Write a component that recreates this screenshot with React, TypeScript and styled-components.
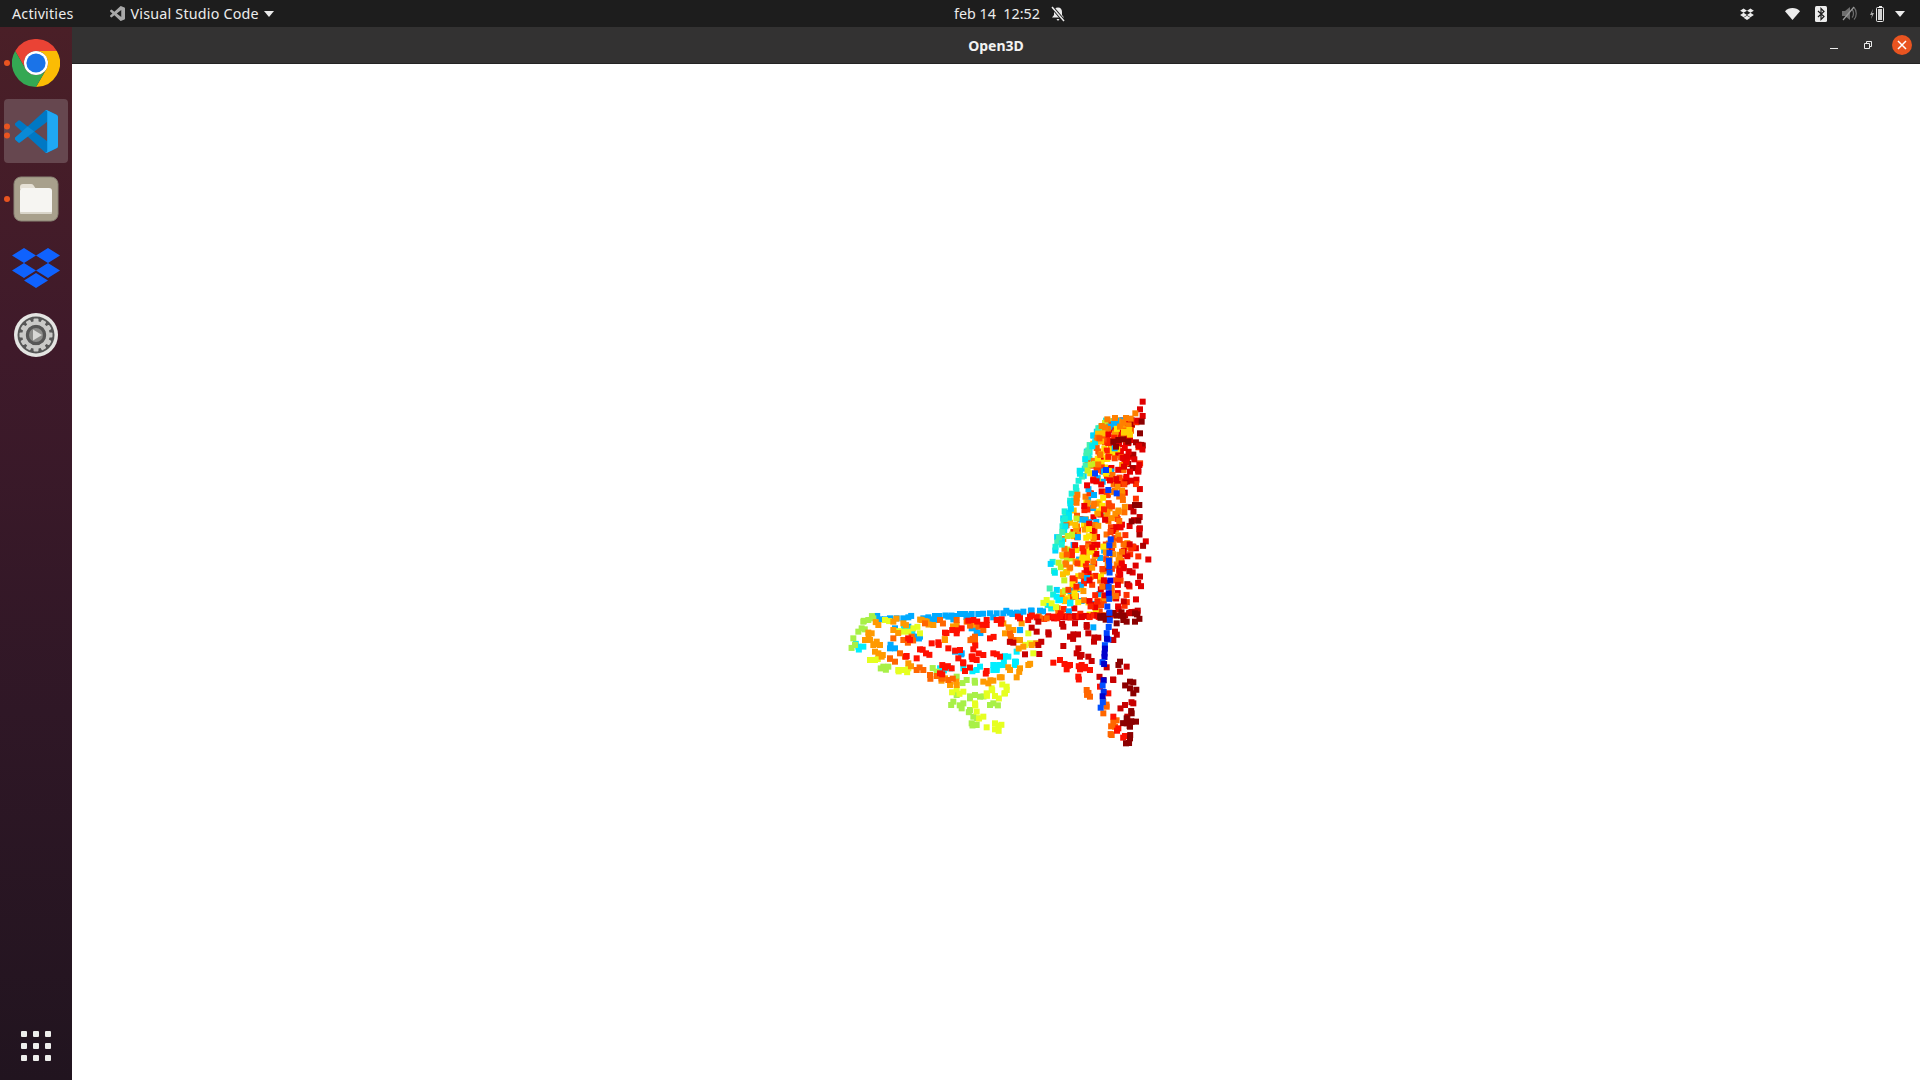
import styled, { createGlobalStyle } from "styled-components";

const GlobalStyle = createGlobalStyle`
  html, body, #root {
    margin: 0;
    height: 100%;
  }
  body {
    overflow: hidden;
    background: #fff;
    font-family: "Noto Sans", "Open Sans", sans-serif;
  }
`;

const Screen = styled.div`
  width: 1920px;
  height: 1080px;
  display: flex;
  flex-direction: column;
  overflow: hidden;
`;

const TopBar = styled.header`
  height: 27px;
  flex: none;
  display: grid;
  grid-template-columns: 942px auto 1fr;
  align-items: center;
  padding: 0 12px;
  background: #1d1d1d;
  color: #ececec;
  font-size: 14.3px;
  line-height: 25px;
`;

const TopLeft = styled.div`
  display: flex;
  align-items: center;
  letter-spacing: 0.2px;
`;

const AppMenu = styled.div`
  display: flex;
  align-items: center;
  margin-left: 36px;
  gap: 6px;
`;

const Caret = styled.svg`
  margin-left: -1px;
`;

const Clock = styled.div`
  display: flex;
  align-items: center;
  gap: 10px;
`;

const Tray = styled.div`
  display: flex;
  align-items: center;
  justify-content: flex-end;
  height: 27px;
  padding-right: 3px;
`;

const TrayIcon = styled.svg<{ $gap: number }>`
  display: block;
  flex: none;
  margin-left: ${(p) => p.$gap}px;
`;

const Body = styled.div`
  flex: 1;
  display: flex;
  min-height: 0;
`;

const Dock = styled.nav`
  width: 72px;
  flex: none;
  display: flex;
  flex-direction: column;
  align-items: center;
  padding: 4px 0 12px;
  box-sizing: border-box;
  background: linear-gradient(180deg, #4a1f27 0%, #3f1a2a 30%, #2f1726 65%, #21141f 100%);
`;

const DockItem = styled.div<{ $active?: boolean }>`
  position: relative;
  width: 64px;
  height: 64px;
  margin-bottom: 4px;
  flex: none;
  display: flex;
  align-items: center;
  justify-content: center;
  border-radius: 4px;
  background: ${(p) => (p.$active ? "#66474f" : "transparent")};
`;

const Dots = styled.div`
  position: absolute;
  left: 0;
  top: 50%;
  transform: translateY(-50%);
  display: flex;
  flex-direction: column;
  gap: 3px;
`;

const Dot = styled.span`
  width: 6px;
  height: 6px;
  border-radius: 50%;
  background: #e95420;
`;

const AppGrid = styled.div`
  margin-top: auto;
  margin-bottom: 7px;
  display: grid;
  grid-template-columns: repeat(3, 6px);
  gap: 6px;
`;

const GridDot = styled.span`
  width: 6px;
  height: 6px;
  border-radius: 1px;
  background: #eeeeec;
`;

const Window = styled.main`
  flex: 1;
  min-width: 0;
  display: flex;
  flex-direction: column;
`;

const TitleBar = styled.div`
  position: relative;
  height: 37px;
  flex: none;
  display: flex;
  align-items: center;
  justify-content: flex-end;
  box-sizing: border-box;
  border-bottom: 1px solid #232323;
  background: #333232;
  padding-right: 8px;
`;

const Title = styled.div`
  position: absolute;
  left: 0;
  right: 0;
  text-align: center;
  color: #f2f2f2;
  font-size: 14px;
  font-weight: 700;
`;

const WinButton = styled.div<{ $close?: boolean }>`
  width: 20px;
  height: 20px;
  margin-left: 14px;
  display: flex;
  align-items: center;
  justify-content: center;
  border-radius: 50%;
  background: ${(p) => (p.$close ? "#e95420" : "transparent")};
`;

const Canvas = styled.svg`
  flex: 1;
  display: block;
  width: 100%;
  min-height: 0;
  background: #fff;
`;

const VSCODE =
  "M96.5 10.8 75.9.9a6.2 6.2 0 0 0-7.1 1.2L29.3 38.1 12.1 25.1a4.2 4.2 0 0 0-5.3.2L1.3 30.3a4.2 4.2 0 0 0 0 6.2L16.2 50 1.3 63.5a4.2 4.2 0 0 0 0 6.2l5.5 5a4.2 4.2 0 0 0 5.3.2l17.2-13 39.5 36a6.2 6.2 0 0 0 7.1 1.2l20.6-9.9a6.2 6.2 0 0 0 3.5-5.6V16.4a6.2 6.2 0 0 0-3.5-5.6zM75 27.3 45.1 50 75 72.7z";

const DROPBOX = "M12 2 0 9.500 12 17l12-7.500zM36 2 24 9.500 36 17l12-7.500zM0 24.500 12 32l12-7.500L12 17zM36 17l-12 7.500L36 32l12-7.500zM12 34.500 24 42l12-7.500L24 27z";

const Chrome = () => (
  <svg width="48" height="48" viewBox="0 0 48 48">
    <path fill="#ea4335" d="M3.2 12A24 24 0 0 1 44.8 12H24A12 12 0 0 0 13.6 30z" />
    <path fill="#fbbc04" d="M44.8 12A24 24 0 0 1 24 48L34.4 30A12 12 0 0 0 24 12z" />
    <path fill="#34a853" d="M24 48A24 24 0 0 1 3.2 12L13.6 30A12 12 0 0 0 34.4 30z" />
    <circle cx="24" cy="24" r="12" fill="#fff" />
    <circle cx="24" cy="24" r="9.6" fill="#1a73e8" />
  </svg>
);

const VsCode = () => (
  <svg width="43" height="43" viewBox="0 0 100 100">
    <path fill="#0078c4" fillRule="evenodd" d={VSCODE} />
    <path fill="#0a8ad6" d="M1.3 63.5 29.3 38.1 45.1 50 12.1 74.9a4.2 4.2 0 0 1-5.3-.2l-5.5-5a4.2 4.2 0 0 1 0-6.2z" />
    <path fill="#1fa8f4" d="M68.8 2.1a6.2 6.2 0 0 1 7.1-1.2l20.6 9.900a6.2 6.2 0 0 1 3.500 5.600v67.200a6.2 6.2 0 0 1-3.500 5.600L75.900 99.100a6.2 6.2 0 0 1-7.100-1.200c3 2.600 6.200.6 6.200-2.400V4.500c0-3-3.200-5-6.200-2.400z" />
  </svg>
);

const Files = () => (
  <svg width="46" height="46" viewBox="0 0 46 46">
    <rect x="1" y="1" width="44" height="44" rx="7" fill="#a8a08c" stroke="#8b8576" />
    <path fill="#e6e1d6" d="M7 11a3 3 0 0 1 3-3h8a3 3 0 0 1 2.500 1.300L23 13H7z" />
    <rect x="7" y="12" width="32" height="26" rx="3" fill="#f6f5f2" />
    <rect x="7" y="36" width="32" height="2" rx="1" fill="#d9d5ca" />
  </svg>
);

const Dropbox = () => (
  <svg width="48" height="42" viewBox="0 0 48 42">
    <path fill="#0f62fe" d={DROPBOX} />
  </svg>
);

const Settings = () => {
  const teeth = Array.from({ length: 12 }, (_, i) => i * 30);
  return (
    <svg width="46" height="46" viewBox="0 0 46 46">
      <circle cx="23" cy="23" r="22" fill="#e4e4e2" />
      <circle cx="23" cy="23" r="18.500" fill="#565656" />
      {teeth.map((a) => (
        <rect key={a} x="20.500" y="6.500" width="5" height="6" rx="1" fill="#c9c9c7" transform={`rotate(${a} 23 23)`} />
      ))}
      <circle cx="23" cy="23" r="12" fill="none" stroke="#c9c9c7" strokeWidth="3.400" />
      <circle cx="23" cy="23" r="7" fill="#8c8c8a" />
      <path fill="#d8d8d6" d="M20 17.500 29 23l-9 5.500z" />
    </svg>
  );
};

// pseudo random, so the cloud stays the same between runs
const makeRandom = (seed: number) => () => {
  seed = (seed + 0x6d2b79f5) | 0;
  let t = Math.imul(seed ^ (seed >>> 15), 1 | seed);
  t = (t + Math.imul(t ^ (t >>> 7), 61 | t)) ^ t;
  return ((t ^ (t >>> 14)) >>> 0) / 4294967296;
};

type Pt = [number, number, string];

const lerpTable = (table: number[][], y: number) => {
  for (let i = 1; i < table.length; i++) {
    if (y <= table[i][0]) {
      const [y0, x0] = table[i - 1];
      const [y1, x1] = table[i];
      return x0 + ((x1 - x0) * (y - y0)) / (y1 - y0);
    }
  }
  return table[table.length - 1][1];
};

const LEFT_EDGE = [[420, 1105], [433, 1094], [477, 1077], [510, 1064], [540, 1053], [577, 1049], [600, 1048], [618, 1046]];
const RIGHT_EDGE = [[420, 1136], [433, 1142], [477, 1140], [520, 1142], [560, 1148], [600, 1142], [618, 1138]];

const pick = (r: () => number, list: string[]) => list[Math.floor(r() * list.length)];

const backrest = (): Pt[] => {
  const r = makeRandom(4711);
  const out: Pt[] = [];
  for (let i = 0; i < 720; i++) {
    const y = 420 + r() * 196;
    const l = lerpTable(LEFT_EDGE, y);
    const w = lerpTable(RIGHT_EDGE, y) - l;
    const u = r();
    let c: string;
    if (u < 0.1) c = pick(r, ["#19f0d8", "#00e8f0", "#44f0b0", "#00d8ff"]);
    else if (u < 0.2) c = pick(r, ["#ff7a00", "#ff5a00", "#ffc000", "#c8f020"]);
    else if (u < 0.55) c = pick(r, ["#ffe000", "#ff7800", "#ff3c00", "#ee0000", "#ff9a00", "#ffe600", "#ff2200", "#00b0ff"]);
    else if (u < 0.78) c = pick(r, ["#f00000", "#ff4400", "#ff7000", "#e60000", "#ff9000"]);
    else c = pick(r, ["#c80000", "#e00000", "#aa0000", "#ff3000"]);
    if (u > 0.78 && r() < 0.62) continue;
    const x = l + Math.min(u, 0.98) * w + (u < 0.1 ? 0 : (r() - 0.5) * 5);
    out.push([x, y, c]);
  }
  return out;
};

// coordinates read from the 3x crop whose corner is at (840, 590)
const SEAT: [string, string][] = [
  ["#00aaff", "120,88 135,88 150,85 170,85 190,85 205,82 250,85 265,82 285,78 298,78 325,80 345,78 360,72 375,72 395,72 415,72 450,70 470,70 490,70 510,68 530,68 550,65 575,62 600,62 340,88 290,90 270,88 395,115 410,128 345,185 365,190 150,175 165,175 165,115 225,140 240,140 205,110 540,120 760,112"],
  ["#00eeff", "200,115 215,125 310,235 300,235 330,235 370,235 410,240 420,230 460,225 480,225 470,240 490,225 530,185 525,215 525,225 505,200 470,235 650,20 660,30 690,40 55,170 70,170"],
  ["#a8f048", "70,95 85,90 100,85 55,125 65,115 40,145 45,165 130,230 145,230 350,315 390,325 405,315 420,320 340,335 370,340 460,340 450,345 365,355 390,360 400,380 395,400 410,405 290,245 350,260 380,270 405,278"],
  ["#e6ff20", "135,90 175,240 190,240 205,235 90,210 105,210 440,310 465,318 455,295 500,290 495,310 350,298 500,300 370,305 405,340 410,365 430,380 440,412 465,400 475,408 465,418 190,125 205,125 220,115 240,130 565,130 580,190 620,30 635,40 570,160"],
  ["#ff9a00", "95,130 90,150 100,165 115,190 125,200 105,185 110,155 75,150 120,165 160,120 160,95 190,100 115,105 245,90 260,95 280,105 315,265 330,285 350,285 430,275 445,280 460,272 485,262 510,240 530,262 540,235 565,225 575,165 550,170 540,150 495,130 520,120 545,100 490,100 410,100 350,105 315,150 205,220"],
  ["#ff6600", "150,205 165,215 180,190 195,200 230,240 250,240 270,255 290,258 305,265 325,270 255,100 300,90 350,90 380,95 430,120 510,130 520,150 160,145 190,150 215,140 405,155 405,140 600,85 620,85 740,300 750,320 790,335 800,350 820,395 825,410 815,435 790,370"],
  ["#ff1000", "210,150 240,178 258,190 275,160 295,157 325,175 230,205 200,198 315,128 350,130 365,115 385,92 400,90 440,90 470,90 485,88 540,85 570,80 590,82 640,80 660,78 360,180 400,178 395,200 410,210 430,195 460,190 480,200 440,243 370,220 375,243 315,233 300,250 335,235 355,205 440,105 450,145 660,210 640,218 680,238 690,225 720,238 735,235 750,240 725,225 715,260 780,290 805,310 820,380 835,415 855,438"],
  ["#c80000", "590,125 625,127 595,165 598,192 555,193 520,158 575,113 595,95 670,110 705,100 740,105 690,140 700,133 745,130 775,143 825,125 820,150 715,175 710,190 720,200 745,200 670,168 762,155 755,213 800,232 790,270 820,270 840,245 860,230 855,345 880,340 862,380"],
  ["#8c0000", "840,215 870,275 880,277 870,295 880,310 875,370 860,385 875,395 860,400 870,410 870,445 858,460 830,100 850,90 885,70 885,95 860,95 805,85 850,78"],
];

// same, for the crop whose corner is at (1030, 390)
const BACK_TOP: [string, string][] = [
  ["#e00000", "338,35 330,58 322,92 338,78 300,150 290,200 313,208 282,230 300,245 304,272 328,225 325,245"],
  ["#8c0000", "250,155 265,150 280,148 295,155 258,170 335,95 330,130 328,345 315,345 325,392 305,394"],
  ["#ff8000", "232,88 255,84 288,84 302,86 316,70 215,108 225,112 270,110 296,106 280,98"],
  ["#ffd000", "298,120 282,126 300,134"],
  ["#0040ff", "195,250 228,240 235,300 260,310"],
];

const chain = (r: () => number, x0: number, x1: number, y0: number, y1: number, n: number, spread: number, colors: string[]): Pt[] =>
  Array.from({ length: n }, (_, i) => {
    const t = i / (n - 1);
    return [
      x0 + (x1 - x0) * t + (r() - 0.5) * spread,
      y0 + (y1 - y0) * t + (r() - 0.5) * spread,
      pick(r, colors),
    ];
  });

const points = (): Pt[] => {
  const r = makeRandom(99);
  const read = (groups: [string, string][], ox: number, oy: number, copies: number): Pt[] =>
    groups.flatMap(([c, s]) =>
      s.split(" ").flatMap((p): Pt[] => {
        const [x, y] = p.split(",").map(Number);
        const base: Pt = [ox + x / 3, oy + y / 3, c];
        return copies && r() < copies ? [base, [base[0] + (r() - 0.5) * 10, base[1] + (r() - 0.5) * 8, c]] : [base];
      }),
    );
  return [
    ...backrest(),
    ...read(BACK_TOP, 1030, 390, 0),
    // thick red edge where seat meets the back
    ...chain(r, 1045, 1100, 618, 616, 24, 3, ["#f00000", "#ff2000", "#e00000"]),
    ...chain(r, 1100, 1137, 616, 613, 16, 4, ["#b00000", "#c80000", "#8c0000"]),
    ...read(SEAT, 840, 590, 0.65),
    // the blue strut runs down through back and leg
    ...chain(r, 1110, 1108, 540, 640, 16, 3, ["#0050ff", "#0040ff", "#0000e0"]),
    ...chain(r, 1107, 1103, 640, 665, 7, 3, ["#0050ff", "#0030e0", "#0000cc"]),
    ...chain(r, 1104, 1102, 680, 708, 6, 3, ["#0030f0", "#0000cc", "#0050ff"]),
  ];
};

const CLOUD = points();

const PointCloud = () => (
  <Canvas viewBox="72 64 1848 1016" preserveAspectRatio="none">
    {CLOUD.map(([x, y, c], i) => (
      <rect key={i} x={x - 3} y={y - 3} width="6" height="6" fill={c} />
    ))}
  </Canvas>
);

const App = () => (
  <>
    <GlobalStyle />
    <Screen>
      <TopBar>
        <TopLeft>
          Activities
          <AppMenu>
            <svg width="15" height="15" viewBox="0 0 100 100">
              <path fill="#a8a8a8" fillRule="evenodd" d={VSCODE} />
            </svg>
            Visual Studio Code
            <Caret width="10" height="6" viewBox="0 0 10 6">
              <path fill="#ececec" d="M0 0h10L5 6z" />
            </Caret>
          </AppMenu>
        </TopLeft>
        <Clock>
          <span>feb 14&nbsp;&nbsp;12:52</span>
          <svg width="16" height="16" viewBox="0 0 16 16">
            <path fill="#ececec" d="M8 1.500c2.600 0 4 2 4 4.500v3l2 2.500H2l2-2.500v-3c0-2.500 1.400-4.500 4-4.500zM6.500 13h3L8 15z" />
            <path stroke="#1d1d1d" strokeWidth="3.400" d="M2 1l12 14" />
            <path stroke="#ececec" strokeWidth="1.500" d="M2 1l12 14" />
          </svg>
        </Clock>
        <Tray>
          <TrayIcon $gap={0} width="14" height="12" viewBox="0 0 48 42">
            <path fill="#ececec" d={DROPBOX} />
          </TrayIcon>
          <TrayIcon $gap={31} width="15" height="12" viewBox="0 0 15 12">
            <path fill="#ececec" d="M7.500 12 0 3.200C2 1.200 4.600 0 7.500 0S13 1.200 15 3.200z" />
          </TrayIcon>
          <TrayIcon $gap={15} width="12" height="16" viewBox="0 0 12 16">
            <rect width="12" height="16" rx="1.500" fill="#ececec" />
            <path fill="none" stroke="#1d1d1d" strokeWidth="1.200" d="M3 5l6 5.500-3 3V2.500l3 3L3 11" />
          </TrayIcon>
          <TrayIcon $gap={15} width="15" height="15" viewBox="0 0 15 15">
            <path fill="#6f6f6f" d="M0 5h3l5-4v13l-5-4H0z" />
            <path fill="none" stroke="#6f6f6f" strokeWidth="1.200" d="M10 3.500c2 2 2 6 0 8M12 1.500c3 3 3 9 0 12" />
            <path stroke="#9a9a9a" strokeWidth="1.200" d="M1 14 12 1" />
          </TrayIcon>
          <TrayIcon $gap={13} width="14" height="16" viewBox="0 0 14 16">
            <path fill="#a8a8a8" d="M3 3 0 9h2L1 13l3-6H2z" />
            <path fill="#ececec" d="M9 0h3v1h-3z" />
            <rect x="6.500" y="1.500" width="7" height="14" rx="1" fill="none" stroke="#ececec" />
            <rect x="8" y="3" width="4" height="11" fill="#d0d0d0" />
          </TrayIcon>
          <TrayIcon $gap={11} width="10" height="6" viewBox="0 0 10 6">
            <path fill="#ececec" d="M0 0h10L5 6z" />
          </TrayIcon>
        </Tray>
      </TopBar>
      <Body>
        <Dock>
          <DockItem>
            <Dots><Dot /></Dots>
            <Chrome />
          </DockItem>
          <DockItem $active>
            <Dots><Dot /><Dot /></Dots>
            <VsCode />
          </DockItem>
          <DockItem>
            <Dots><Dot /></Dots>
            <Files />
          </DockItem>
          <DockItem><Dropbox /></DockItem>
          <DockItem><Settings /></DockItem>
          <AppGrid>
            {Array.from({ length: 9 }, (_, i) => <GridDot key={i} />)}
          </AppGrid>
        </Dock>
        <Window>
          <TitleBar>
            <Title>Open3D</Title>
            <WinButton>
              <svg width="10" height="10" viewBox="0 0 10 10"><path stroke="#ececec" d="M1 8.500h8" /></svg>
            </WinButton>
            <WinButton>
              <svg width="10" height="10" viewBox="0 0 10 10">
                <path fill="none" stroke="#ececec" d="M1.500 3.500h5v5h-5zM3.500 3V1.500h5v5H7" />
              </svg>
            </WinButton>
            <WinButton $close>
              <svg width="10" height="10" viewBox="0 0 10 10"><path stroke="#fff" strokeWidth="1.500" d="M1 1l8 8M9 1l-8 8" /></svg>
            </WinButton>
          </TitleBar>
          <PointCloud />
        </Window>
      </Body>
    </Screen>
  </>
);

export default App;
